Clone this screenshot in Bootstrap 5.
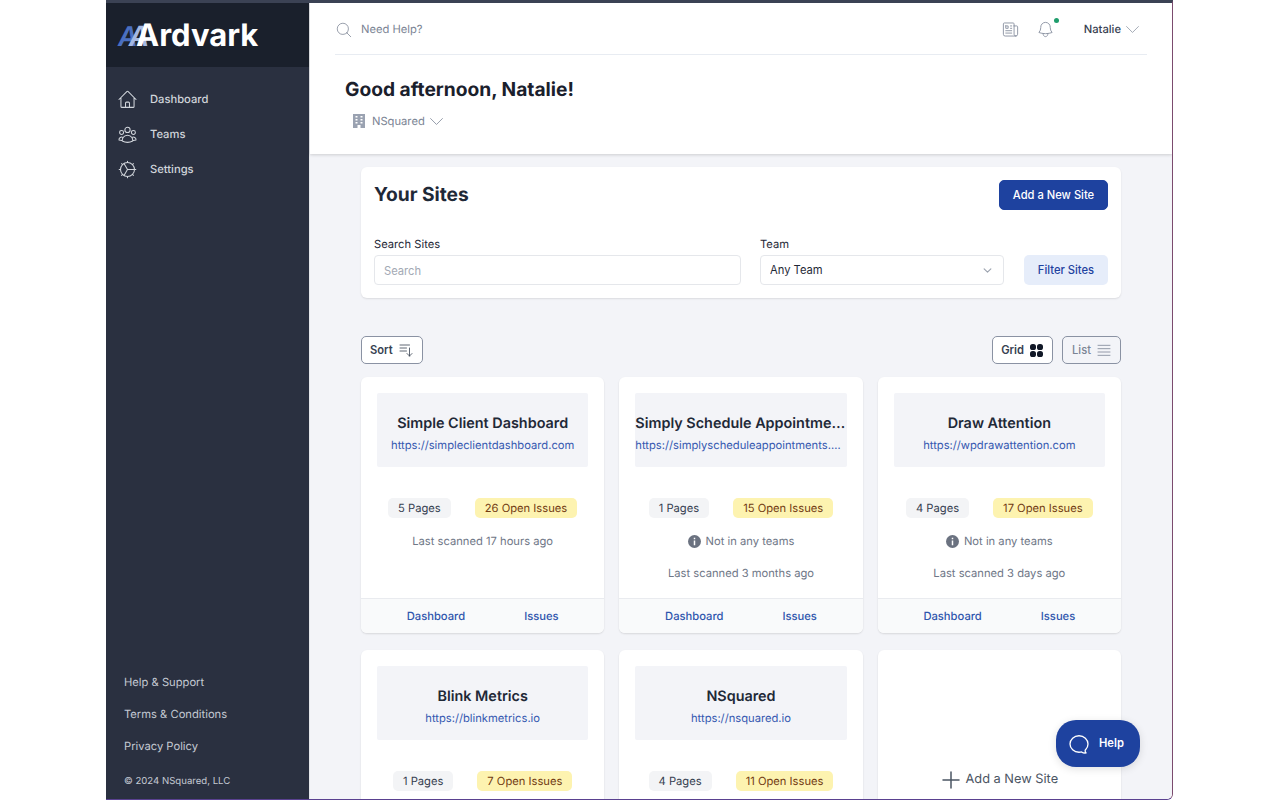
<!DOCTYPE html>
<html lang="en">
<head>
    <meta charset="UTF-8">
    <meta name="viewport" content="width=device-width, initial-scale=1.0">
    <title>Ardvark - Dashboard</title>
    <link href="https://cdn.jsdelivr.net/npm/bootstrap@5.3.2/dist/css/bootstrap.min.css" rel="stylesheet">
    <style>
        html, body { height: 100%; overflow: hidden; background: #fff; }
        body { font-family: Inter, "Liberation Sans", sans-serif; font-size: 11.2px; color: #1f2937; text-rendering: geometricPrecision; }
        svg { display: block; flex-shrink: 0; fill: none; stroke: currentColor; stroke-width: 1.5; stroke-linecap: round; stroke-linejoin: round; }

        .app-frame { width: 1067px; height: 800px; margin-left: 106px; border-top: 3px solid #3b4254; border-right: 1px solid #7b4b6e; border-bottom: 1px solid #5a4190; border-bottom-right-radius: 6px; overflow: hidden; position: relative; }

        .side-bar { width: 203px; background: #2a3040; flex-shrink: 0; }
        .side-logo { height: 64px; background: #1a202c; padding: 1px 0 0 12px; font-size: 31px; font-weight: 700; color: #fff; line-height: 64px; }
        .side-logo .logo-a1 { color: #4a6fc0; font-style: italic; font-weight: 600; font-size: 27px; }
        .side-logo .logo-a2 { color: #a4b8e2; font-size: 28px; margin-left: -9px; font-style: italic; font-weight: 600; }
        .side-logo .logo-a3 { margin-left: -13px; }
        .side-nav { padding: 15px 0 0 11px; }
        .side-link { height: 35px; gap: 12px; color: #d1d5db; text-decoration: none; font-weight: 500; font-size: 11.2px; }
        .side-link svg { width: 21px; height: 21px; stroke-width: 1.2; }
        .side-foot { padding: 0 0 9px 18px; }
        .side-foot a { display: block; color: #c4c9d2; text-decoration: none; font-size: 11.2px; line-height: 16px; margin-bottom: 16px; }
        .side-foot div { color: #c4c9d2; font-size: 9.6px; line-height: 16px; margin-top: 20px; }

        .main-area { background: #f3f4f8; min-width: 0; border-left: 1px solid #e5e7eb; }
        .page-head { background: #fff; height: 151px; padding: 0 25px; box-shadow: 0 1px 3px rgba(0,0,0,.16); flex-shrink: 0; position: relative; }
        .top-bar { height: 52px; padding-top: 2px; border-bottom: 1px solid #e8ecf2; color: #6b7280; }
        .top-bar .help-text { color: #7b8494; font-size: 11.2px; margin-left: 8px; }
        .top-bar .icon-btn { color: #8e96a4; width: 18px; height: 18px; stroke-width: 1.2; }
        .top-bar .news-btn, .top-bar .bell-btn { width: 19px; height: 19px; }
        .top-bar .user-caret { width: 19px; height: 19px; margin: 0 5px 0 2px; stroke-width: 1; }
        .bell-wrap { position: relative; margin-left: 16px; margin-right: 29px; }
        .bell-dot { position: absolute; width: 5px; height: 5px; border-radius: 50%; background: #1f9d6c; top: -2px; right: -4px; }
        .user-name { color: #374151; font-size: 11.2px; font-weight: 500; }
        .greeting { font-size: 19.2px; font-weight: 700; color: #1a202c; margin: 22px 0 0 10px; line-height: 24px; }
        .org-pick { margin: 10px 0 0 18px; color: #7b8494; font-size: 11.2px; gap: 7px; line-height: 20px; }
        .org-pick .org-caret { width: 19px; height: 19px; stroke-width: 1; margin: -2px 0 -2px -5px; }
        .org-icon { width: 12px; height: 14px; stroke: none; }

        .page-body { width: 760px; margin: 13px 0 0 51px; }
        .search-box { padding: 13px; border: 0; border-radius: 6px; box-shadow: 0 1px 2px rgba(0,0,0,.1); height: 131px; }
        .search-box h2 { font-size: 19.2px; font-weight: 700; color: #1f2937; margin: 0; }
        .btn-navy { background: #1e429f; border: 1px solid #1e429f; color: #fff; font-size: 11.2px; font-weight: 500; height: 30px; width: 109px; padding: 0; border-radius: 5px; }
        .btn-soft { background: #e6edfa; color: #1e429f; border: 0; font-size: 11.2px; font-weight: 500; height: 30px; width: 84px; padding: 1px 0 0; border-radius: 5px; }
        .filter-row { margin-top: 26px; }
        .search-col { width: 367px; margin-right: 19px; }
        .team-col { width: 244px; margin-right: 20px; }
        .field-label { font-size: 11.2px; line-height: 16px; margin: 0 0 3px; color: #1f2937; }
        .search-box .form-control, .search-box .form-select { height: 30px; min-height: 0; font-size: 11.2px; padding-top: 1px; padding-bottom: 0; border-color: #e5e7eb; border-radius: 4px; padding-left: 9px; color: #1f2937; }
        .search-box .form-control::placeholder { color: #a3a9b4; }
        .search-box .form-select { background-position: right 10px center; background-size: 11px 9px; background-image: url("data:image/svg+xml,%3csvg xmlns='http://www.w3.org/2000/svg' viewBox='0 0 16 16'%3e%3cpath fill='none' stroke='%239ca3af' stroke-linecap='round' stroke-linejoin='round' stroke-width='2' d='m2 5 6 6 6-6'/%3e%3c/svg%3e"); }

        .tool-row { margin-top: 38px; }
        .tool-btn { background: #fff; border: 1px solid #8a92a3; border-radius: 5px; height: 28px; padding: 0 8px; gap: 5px; font-size: 11.2px; font-weight: 600; color: #374151; }
        .tool-btn.is-off { background: transparent; color: #7b8494; font-weight: 500; margin-left: 1px; padding-left: 9px; }
        .tool-btn svg { width: 16px; height: 16px; stroke-width: 1.2; }
        .tool-btn .solid-icon { fill: #111827; stroke: none; width: 15px; height: 15px; }

        .site-grid { display: grid; grid-template-columns: repeat(3, 1fr); gap: 17px 15px; margin-top: 13px; }
        .site-card { border: 0; border-radius: 6px; box-shadow: 0 1px 2px rgba(0,0,0,.12); height: 256px; overflow: hidden; }
        .site-top { margin: 16px 16px 0; height: 74px; background: #f3f4f8; border-radius: 2px; text-align: center; padding-top: 21px; flex-shrink: 0; }
        .site-name { font-size: 14.4px; font-weight: 600; color: #1f2937; line-height: 20px; }
        .site-url { font-size: 11.2px; line-height: 16px; color: #3558b0; margin-top: 3px; display: block; text-decoration: none; }
        .stat-row { margin-top: 31px; gap: 24px; }
        .stat-tag { font-size: 11.2px; font-weight: 400; line-height: 20px; padding: 0 10px; border-radius: 5px; }
        .tag-gray { background: #f3f4f6; color: #374151; }
        .tag-yellow { background: #fdf3b0; color: #723b13; }
        .site-note { color: #6f7787; font-size: 11.2px; line-height: 16px; text-align: center; margin-top: 15px; gap: 5px; }
        .site-note + .site-note { margin-top: 16px; }
        .note-i { width: 13px; height: 13px; stroke: none; }
        .site-foot { margin-top: auto; height: 35px; background: #f9fafb; border-top: 1px solid #e9ebef; gap: 59px; }
        .site-foot a { color: #2f55ad; text-decoration: none; font-size: 11.2px; font-weight: 500; }
        .add-site { color: #4b5563; font-size: 12.8px; gap: 5px; padding: 120px 0 0 2px; }
        .add-site svg { width: 18px; height: 18px; stroke-width: 1.5; }

        .help-fab { position: absolute; left: 950px; top: 717px; width: 84px; height: 47px; background: #1e429f; color: #fff; border: 0; border-radius: 20px; box-shadow: 0 2px 8px rgba(0,0,0,.12); font-size: 11.2px; font-weight: 600; gap: 8px; padding: 0 0 0 11px; }
        .help-fab svg { width: 24px; height: 24px; stroke-width: 1.3; }
    </style>
</head>
<body>
    <div class="app-frame d-flex">
        <!-- Sidebar -->
        <aside class="side-bar d-flex flex-column">
            <div class="side-logo"><span class="logo-a1">A</span><span class="logo-a2">A</span><span class="logo-a3">Ardvark</span></div>
            <nav class="side-nav flex-grow-1">
                <a class="side-link d-flex align-items-center" href="#">
                    <svg viewBox="0 0 24 24"><path d="M2.25 12l8.954-8.955c.44-.439 1.152-.439 1.591 0L21.75 12M4.5 9.75v10.125c0 .621.504 1.125 1.125 1.125H9.75v-4.875c0-.621.504-1.125 1.125-1.125h2.25c.621 0 1.125.504 1.125 1.125V21h4.125c.621 0 1.125-.504 1.125-1.125V9.75M8.25 21h8.25"/></svg>
                    Dashboard
                </a>
                <a class="side-link d-flex align-items-center" href="#">
                    <svg viewBox="0 0 24 24"><path d="M18 18.72a9.094 9.094 0 003.741-.479 3 3 0 00-4.682-2.72m.94 3.198l.001.031c0 .225-.012.447-.037.666A11.944 11.944 0 0112 21c-2.17 0-4.207-.576-5.963-1.584A6.062 6.062 0 016 18.719m12 0a5.971 5.971 0 00-.941-3.197m0 0A5.995 5.995 0 0012 12.75a5.995 5.995 0 00-5.058 2.772m0 0a3 3 0 00-4.681 2.72 8.986 8.986 0 003.74.477m.94-3.197a5.971 5.971 0 00-.94 3.197M15 6.75a3 3 0 11-6 0 3 3 0 016 0zm6 3a2.25 2.25 0 11-4.5 0 2.25 2.25 0 014.5 0zm-13.5 0a2.25 2.25 0 11-4.5 0 2.25 2.25 0 014.5 0z"/></svg>
                    Teams
                </a>
                <a class="side-link d-flex align-items-center" href="#">
                    <svg viewBox="0 0 24 24"><circle cx="12" cy="12" r="8"/><path d="M12 12h8M12 12L8 5.1M12 12l-4 6.9M12 2.5V4M12 20v1.5M2.5 12H4M20 12h1.5M5.3 5.3l1 1M17.7 17.7l1 1M5.3 18.7l1-1M17.7 6.3l1-1"/></svg>
                    Settings
                </a>
            </nav>
            <div class="side-foot">
                <a href="#">Help &amp; Support</a>
                <a href="#">Terms &amp; Conditions</a>
                <a href="#">Privacy Policy</a>
                <div>© 2024 NSquared, LLC</div>
            </div>
        </aside>

        <main class="main-area flex-grow-1 d-flex flex-column">
            <!-- Header -->
            <header class="page-head">
                <div class="top-bar d-flex align-items-center">
                    <svg class="icon-btn" viewBox="0 0 24 24"><path d="M21 21l-5.197-5.197m0 0A7.5 7.5 0 105.196 5.196a7.5 7.5 0 0010.607 10.607z"/></svg>
                    <span class="help-text flex-grow-1">Need Help?</span>
                    <svg class="icon-btn news-btn" viewBox="0 0 24 24"><path d="M12 7.5h1.5m-1.5 3h1.5m-7.5 3h7.5m-7.5 3h7.5m3-9h3.375c.621 0 1.125.504 1.125 1.125V18a2.25 2.25 0 01-2.25 2.25M16.5 7.5V18a2.25 2.25 0 002.25 2.25M16.5 7.5V4.875c0-.621-.504-1.125-1.125-1.125H4.125C3.504 3.75 3 4.254 3 4.875V18a2.25 2.25 0 002.25 2.25h13.5M6 7.5h3v3H6v-3z"/></svg>
                    <div class="bell-wrap">
                        <svg class="icon-btn bell-btn" viewBox="0 0 24 24"><path d="M14.857 17.082a23.848 23.848 0 005.454-1.31A8.967 8.967 0 0118 9.75v-.7V9A6 6 0 006 9v.75a8.967 8.967 0 01-2.312 6.022c1.733.64 3.56 1.085 5.455 1.31m5.714 0a24.255 24.255 0 01-5.714 0m5.714 0a3 3 0 11-5.714 0"/></svg>
                        <span class="bell-dot"></span>
                    </div>
                    <span class="user-name">Natalie</span>
                    <svg class="icon-btn user-caret" viewBox="0 0 24 24"><path d="M19.5 8.25l-7.5 7.5-7.5-7.5"/></svg>
                </div>
                <h1 class="greeting">Good afternoon, Natalie!</h1>
                <div class="org-pick d-flex align-items-center">
                    <svg class="org-icon" viewBox="0 0 12 14"><path fill="#9aa2b1" d="M0 0h12v14H7.5v-3h-3v3H0z"/><path fill="#fff" d="M2.5 2h2v1.5h-2zM7.5 2h2v1.5h-2zM2.5 5h2v1.5h-2zM7.5 5h2v1.5h-2zM2.5 8h2v1.5h-2zM7.5 8h2v1.5h-2z"/></svg>
                    <span>NSquared</span>
                    <svg class="org-caret" viewBox="0 0 24 24"><path d="M19.5 8.25l-7.5 7.5-7.5-7.5"/></svg>
                </div>
            </header>

            <div class="page-body">
                <!-- Search -->
                <section class="card search-box">
                    <div class="d-flex justify-content-between align-items-center">
                        <h2>Your Sites</h2>
                        <button class="btn btn-navy" type="button">Add a New Site</button>
                    </div>
                    <div class="filter-row d-flex align-items-end">
                        <div class="search-col">
                            <label class="field-label d-block">Search Sites</label>
                            <input class="form-control" type="text" placeholder="Search">
                        </div>
                        <div class="team-col">
                            <label class="field-label d-block">Team</label>
                            <select class="form-select"><option>Any Team</option></select>
                        </div>
                        <button class="btn btn-soft" type="button">Filter Sites</button>
                    </div>
                </section>

                <!-- Toolbar -->
                <div class="tool-row d-flex align-items-center gap-2">
                    <button class="tool-btn d-flex align-items-center me-auto" type="button">Sort
                        <svg viewBox="0 0 24 24"><path d="M3 4.5h14.25M3 9h9.75M3 13.5h9.75m4.5-4.5v12m0 0l-3.75-3.75M17.25 21L21 17.25"/></svg>
                    </button>
                    <button class="tool-btn d-flex align-items-center" type="button">Grid
                        <svg class="solid-icon" viewBox="0 0 15 15"><rect x="1" y="1" width="6" height="6" rx="2.6"/><rect x="8" y="1" width="6" height="6" rx="2.6"/><rect x="1" y="8" width="6" height="6" rx="2.6"/><rect x="8" y="8" width="6" height="6" rx="2.6"/></svg>
                    </button>
                    <button class="tool-btn is-off d-flex align-items-center" type="button">List
                        <svg viewBox="0 0 24 24"><path d="M3 5h18M3 10h18M3 15h18M3 20h18"/></svg>
                    </button>
                </div>

                <!-- Sites -->
                <div class="site-grid">
                    <article class="card site-card">
                        <div class="site-top">
                            <div class="site-name text-truncate">Simple Client Dashboard</div>
                            <a class="site-url text-truncate" href="#">https://simpleclientdashboard.com</a>
                        </div>
                        <div class="stat-row d-flex justify-content-center">
                            <span class="stat-tag tag-gray">5 Pages</span>
                            <span class="stat-tag tag-yellow">26 Open Issues</span>
                        </div>
                        <div class="site-note">Last scanned 17 hours ago</div>
                        <div class="site-foot d-flex align-items-center justify-content-center"><a href="#">Dashboard</a><a href="#">Issues</a></div>
                    </article>

                    <article class="card site-card">
                        <div class="site-top">
                            <div class="site-name text-truncate">Simply Schedule Appointments</div>
                            <a class="site-url text-truncate" href="#">https://simplyscheduleappointments.com</a>
                        </div>
                        <div class="stat-row d-flex justify-content-center">
                            <span class="stat-tag tag-gray">1 Pages</span>
                            <span class="stat-tag tag-yellow">15 Open Issues</span>
                        </div>
                        <div class="site-note d-flex justify-content-center align-items-center">
                            <svg class="note-i" viewBox="0 0 14 14"><circle cx="7" cy="7" r="7" fill="#6b7280"/><path fill="#fff" d="M6.2 3h1.6v1.6H6.2zM6.2 6h1.6v5H6.2z"/></svg>
                            Not in any teams
                        </div>
                        <div class="site-note">Last scanned 3 months ago</div>
                        <div class="site-foot d-flex align-items-center justify-content-center"><a href="#">Dashboard</a><a href="#">Issues</a></div>
                    </article>

                    <article class="card site-card">
                        <div class="site-top">
                            <div class="site-name text-truncate">Draw Attention</div>
                            <a class="site-url text-truncate" href="#">https://wpdrawattention.com</a>
                        </div>
                        <div class="stat-row d-flex justify-content-center">
                            <span class="stat-tag tag-gray">4 Pages</span>
                            <span class="stat-tag tag-yellow">17 Open Issues</span>
                        </div>
                        <div class="site-note d-flex justify-content-center align-items-center">
                            <svg class="note-i" viewBox="0 0 14 14"><circle cx="7" cy="7" r="7" fill="#6b7280"/><path fill="#fff" d="M6.2 3h1.6v1.6H6.2zM6.2 6h1.6v5H6.2z"/></svg>
                            Not in any teams
                        </div>
                        <div class="site-note">Last scanned 3 days ago</div>
                        <div class="site-foot d-flex align-items-center justify-content-center"><a href="#">Dashboard</a><a href="#">Issues</a></div>
                    </article>

                    <article class="card site-card">
                        <div class="site-top">
                            <div class="site-name text-truncate">Blink Metrics</div>
                            <a class="site-url text-truncate" href="#">https://blinkmetrics.io</a>
                        </div>
                        <div class="stat-row d-flex justify-content-center">
                            <span class="stat-tag tag-gray">1 Pages</span>
                            <span class="stat-tag tag-yellow">7 Open Issues</span>
                        </div>
                    </article>

                    <article class="card site-card">
                        <div class="site-top">
                            <div class="site-name text-truncate">NSquared</div>
                            <a class="site-url text-truncate" href="#">https://nsquared.io</a>
                        </div>
                        <div class="stat-row d-flex justify-content-center">
                            <span class="stat-tag tag-gray">4 Pages</span>
                            <span class="stat-tag tag-yellow">11 Open Issues</span>
                        </div>
                    </article>

                    <article class="card site-card">
                        <div class="add-site d-flex align-items-center justify-content-center">
                            <svg viewBox="0 0 18 18"><path d="M9 1v16M1 9h16"/></svg>
                            Add a New Site
                        </div>
                    </article>
                </div>
            </div>
        </main>

        <button class="help-fab d-flex align-items-center" type="button">
            <svg viewBox="0 0 24 24"><path transform="matrix(-1 0 0 1 24 0)" d="M12 20.25c4.97 0 9-3.694 9-8.25s-4.03-8.25-9-8.25S3 7.444 3 12c0 2.104.859 4.023 2.273 5.48.432.447.74 1.04.586 1.641a4.483 4.483 0 01-.923 1.785A5.969 5.969 0 006 21c1.282 0 2.47-.402 3.445-1.087.81.22 1.668.337 2.555.337z"/></svg>
            Help
        </button>
    </div>
    <script src="https://cdn.jsdelivr.net/npm/bootstrap@5.3.2/dist/js/bootstrap.bundle.min.js"></script>
</body>
</html>
